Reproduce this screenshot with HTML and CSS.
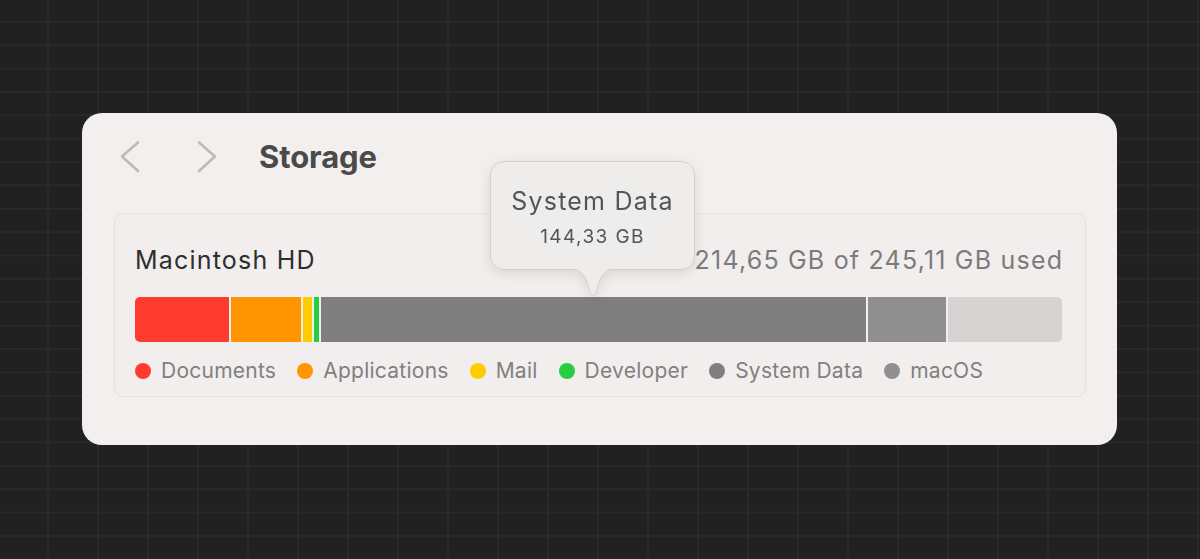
FILE: index.html
```html
<!DOCTYPE html>
<html>
<head>
<meta charset="utf-8">
<link rel="stylesheet" href="styles.css">
</head>
<body>
<div class="stage">
  <div class="card">
    <div class="header">
      <svg class="chev" width="24" height="34" viewBox="0 0 24 34"><path d="M20 2.5 L4 16.5 L20 31" fill="none" stroke="#bdbab9" stroke-width="2.6" stroke-linecap="round" stroke-linejoin="round"/></svg>
      <svg class="chev chev-right" width="24" height="34" viewBox="0 0 24 34"><path d="M4 2.5 L20 16.5 L4 31" fill="none" stroke="#bdbab9" stroke-width="2.6" stroke-linecap="round" stroke-linejoin="round"/></svg>
      <h1 class="title">Storage</h1>
    </div>
    <div class="panel">
      <div class="row">
        <span class="disk">Macintosh HD</span>
        <span class="used">214,65 GB of 245,11 GB used</span>
      </div>
      <div class="bar">
        <div class="seg red" style="width:94px"></div>
        <div class="seg orange" style="width:70px"></div>
        <div class="seg yellow" style="width:9px"></div>
        <div class="seg green" style="width:5px"></div>
        <div class="seg sys" style="width:545px"></div>
        <div class="seg mac" style="width:78px"></div>
        <div class="seg free"></div>
      </div>
      <div class="legend">
        <span class="item"><i class="dot red"></i>Documents</span>
        <span class="item"><i class="dot orange"></i>Applications</span>
        <span class="item"><i class="dot yellow"></i>Mail</span>
        <span class="item"><i class="dot green"></i>Developer</span>
        <span class="item"><i class="dot sys"></i>System Data</span>
        <span class="item"><i class="dot mac"></i>macOS</span>
      </div>
    </div>
    <div class="tooltip">
      <div class="tip-box">
        <div class="tip-title">System Data</div>
        <div class="tip-size">144,33 GB</div>
      </div>
      <svg class="tip-arrow" width="42" height="28" viewBox="0 0 42 28"><path d="M0 0 C6 0 9 3 13 8 L19 25.5 Q21 28 23 25.5 L29 8 C33 3 36 0 42 0" fill="#efedec" stroke="#d3d0cf" stroke-width="1"/></svg>
    </div>
  </div>
</div>
</body>
</html>
```

FILE: styles.css
```css
html, body {
  margin: 0;
  padding: 0;
}
body {
  width: 1200px;
  height: 559px;
  overflow: hidden;
  background-color: #212121;
  background-image:
    linear-gradient(to right, #292929 2px, transparent 2px),
    linear-gradient(to bottom, #292929 2px, transparent 2px);
  background-size: 50px 23.36px;
  background-position: 47px 21px;
  font-family: Inter, "Noto Sans", "Liberation Sans", sans-serif;
}
.stage {
  padding: 113px 0 0 82px;
}
.card {
  position: relative;
  width: 1035px;
  height: 332px;
  box-sizing: border-box;
  background: #f2efee;
  border-radius: 20px;
  padding: 27px 31px 0 32px;
}
.header {
  display: flex;
  align-items: center;
  height: 34px;
}
.chev {
  display: block;
  margin-left: 4px;
}
.chev-right {
  margin-left: 53px;
}
.title {
  margin: 0 0 0 40px;
  font-size: 31px;
  line-height: 36px;
  font-weight: 700;
  color: #4a4a4a;
  letter-spacing: -0.1px;
}
.panel {
  margin-top: 39px;
  height: 184px;
  box-sizing: border-box;
  border: 1px solid #e4e1e0;
  border-radius: 9px;
  background: #f1eeed;
  padding: 31px 23px 0 20px;
}
.row {
  display: flex;
  justify-content: space-between;
  align-items: baseline;
  height: 30px;
  line-height: 30px;
  font-size: 25px;
  letter-spacing: 1.2px;
}
.disk {
  color: #2e2e2e;
}
.used {
  color: #7b7b7b;
  margin-right: -1.2px;
}
.bar {
  margin-top: 22px;
  height: 45px;
  display: flex;
  gap: 2px;
  border-radius: 5px;
  overflow: hidden;
}
.seg {
  height: 100%;
  flex: none;
}
.seg.free {
  flex: 1;
}
.red { background: #ff3b30; }
.orange { background: #ff9500; }
.yellow { background: #ffcc00; }
.green { background: #28cd41; }
.sys { background: #7f7f7f; }
.mac { background: #8f8f8f; }
.free { background: #d6d3d2; }
.legend {
  margin-top: 17px;
  display: flex;
  gap: 21px;
  height: 24px;
  line-height: 24px;
  font-size: 21px;
  letter-spacing: 0.25px;
  color: #808080;
}
.item {
  display: flex;
  align-items: center;
}
.dot {
  display: block;
  width: 16px;
  height: 16px;
  border-radius: 50%;
  margin-right: 10px;
}
.tooltip {
  position: absolute;
  left: 408px;
  top: 48px;
  width: 205px;
  filter: drop-shadow(0 3px 6px rgba(0,0,0,0.10));
}
.tip-box {
  height: 109px;
  box-sizing: border-box;
  background: #efedec;
  border: 1px solid #d3d0cf;
  border-radius: 14px;
  text-align: center;
  padding-top: 23px;
}
.tip-title {
  font-size: 25px;
  line-height: 32px;
  letter-spacing: 1.2px;
  color: #555555;
}
.tip-size {
  font-size: 19px;
  line-height: 24px;
  letter-spacing: 1.4px;
  color: #555555;
  margin-top: 8px;
}
.tip-arrow {
  display: block;
  position: absolute;
  left: 82px;
  top: 108px;
}
```
